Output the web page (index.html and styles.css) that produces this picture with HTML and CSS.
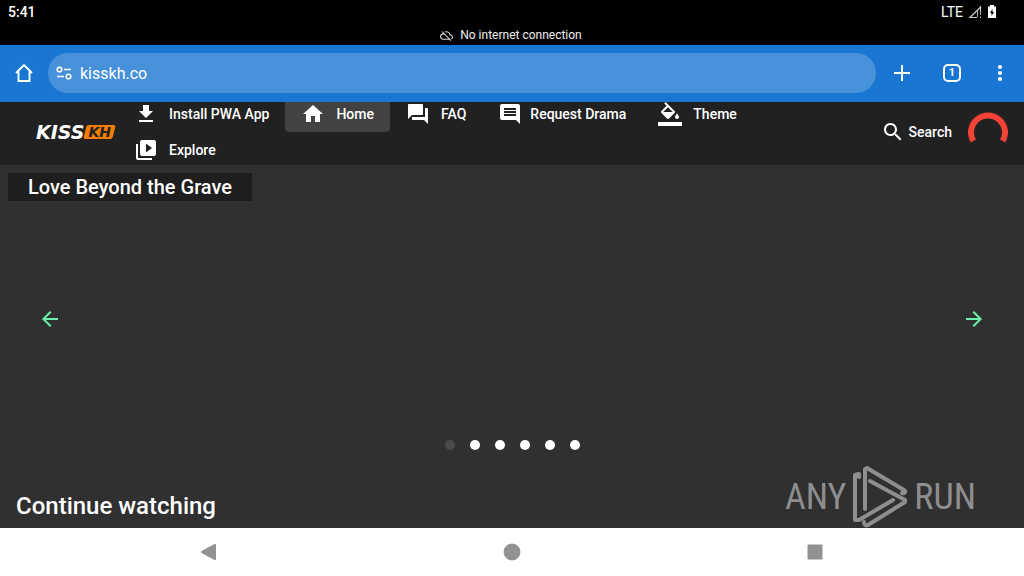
FILE: index.html
```
<!DOCTYPE html>
<html lang="en">
<head>
  <meta charset="UTF-8" />
  <meta name="viewport" content="width=device-width, initial-scale=1.0"/>
  <title>KissKH</title>
  <link rel="stylesheet" href="styles.css">
</head>
<body>

<!-- Android status bar -->
<div class="status-bar">
  <span class="clock">5:41</span>
  <div class="status-icons">
    <span>LTE</span>
    <svg width="14" height="14" viewBox="0 0 14 14"><path d="M9 12.500H2L12.500 2v5" fill="none" stroke="#ccc" stroke-width="1.200"/><path d="M12.500 6v4M12.500 11.500v1.500M9.500 6v6" stroke="#aaa" stroke-width="1"/></svg>
    <svg width="10" height="14" viewBox="0 0 10 14"><path d="M3 0h4v1.500h2V13H1V1.500h2z" fill="#fff"/><path d="M5.500 4L3 8h1.500v3L7 7H5.500z" fill="#000"/></svg>
  </div>
</div>
<div class="offline-bar">
  <svg width="13" height="13" viewBox="0 0 24 24" fill="#ddd"><path d="M19.350 10.040C18.670 6.590 15.640 4 12 4c-1.480 0-2.850.430-4.010 1.170l1.460 1.460C10.210 6.230 11.080 6 12 6c3.040 0 5.500 2.460 5.500 5.500v.500H19c1.660 0 3 1.340 3 3 0 1.130-.640 2.110-1.560 2.620l1.450 1.450C23.160 18.160 24 16.680 24 15c0-2.640-2.050-4.780-4.650-4.960zM3 5.270l2.750 2.740C2.560 8.150 0 10.770 0 14c0 3.310 2.690 6 6 6h11.730l2 2L21 20.730 4.270 4 3 5.270zM7.730 10l8 8H6c-2.210 0-4-1.790-4-4s1.790-4 4-4h1.730z"/></svg>
  <span>No internet connection</span>
</div>

<!-- Browser toolbar -->
<div class="browser-bar">
  <button class="tool" aria-label="Home page">
    <svg width="20" height="20" viewBox="0 0 20 20"><path d="M2 10L10 2l8 8M4.500 8.500V18h11V8.500" fill="none" stroke="#fff" stroke-width="1.900"/></svg>
  </button>
  <div class="address">
    <svg width="16" height="14" viewBox="0 0 16 14" fill="none" stroke="#fff" stroke-width="1.600"><circle cx="3.500" cy="3.500" r="2.300"/><path d="M8 3.500h7M1 10.500h7"/><circle cx="12.500" cy="10.500" r="2.300"/></svg>
    <input type="text" aria-label="Address" value="kisskh.co">
  </div>
  <button class="tool new-tab" aria-label="New tab">
    <svg width="18" height="18" viewBox="0 0 18 18"><path d="M9 1v16M1 9h16" stroke="#fff" stroke-width="2"/></svg>
  </button>
  <button class="tool" aria-label="Tabs"><span class="tab-count">1</span></button>
  <button class="tool" aria-label="Menu">
    <svg width="6" height="18" viewBox="0 0 6 18" fill="#fff"><circle cx="3" cy="3" r="2.100"/><circle cx="3" cy="9" r="2.100"/><circle cx="3" cy="15" r="2.100"/></svg>
  </button>
</div>

<!-- Site header -->
<header class="site-header">
  <a class="logo" href="#"><span>KISS</span><span class="logo-kh">KH</span></a>
  <nav class="menu">
    <a href="#"><svg viewBox="0 0 24 24"><path d="M19 9h-4V3H9v6H5l7 7 7-7zM5 18v2h14v-2H5z"/></svg>Install PWA App</a>
    <a href="#" class="active"><svg viewBox="0 0 24 24"><path d="M10 20v-6h4v6h5v-8h3L12 3 2 12h3v8z"/></svg>Home</a>
    <a href="#"><svg viewBox="0 0 24 24"><path d="M21 6h-2v9H6v2c0 .550.450 1 1 1h11l4 4V7c0-.550-.450-1-1-1zm-4 6V3c0-.550-.450-1-1-1H3c-.550 0-1 .450-1 1v14l4-4h10c.550 0 1-.450 1-1z"/></svg>FAQ</a>
    <a href="#" class="tight"><svg viewBox="0 0 24 24"><path d="M21.990 4c0-1.100-.890-2-1.990-2H4c-1.100 0-2 .900-2 2v12c0 1.100.900 2 2 2h14l4 4-.010-18zM18 14H6v-2h12v2zm0-3H6V9h12v2zm0-3H6V6h12v2z"/></svg>Request Drama</a>
    <a href="#"><svg viewBox="0 0 24 24"><path d="M16.560 8.940L7.620 0 6.210 1.410l2.380 2.380-5.150 5.150c-.590.590-.590 1.540 0 2.120l5.500 5.500c.290.290.680.440 1.060.440s.770-.150 1.060-.440l5.500-5.500c.590-.580.590-1.530 0-2.120zM5.210 10L10 5.210 14.790 10H5.210zM19 11.500s-2 2.170-2 3.500c0 1.100.900 2 2 2s2-.900 2-2c0-1.330-2-3.500-2-3.500zM0 20h24v4H0z"/></svg>Theme</a>
    <a href="#"><svg viewBox="0 0 24 24"><path d="M4 6H2v14c0 1.100.900 2 2 2h14v-2H4V6zm16-4H8c-1.100 0-2 .900-2 2v12c0 1.100.900 2 2 2h12c1.100 0 2-.900 2-2V4c0-1.100-.900-2-2-2zm-8 12.500v-9l6 4.500-6 4.500z"/></svg>Explore</a>
  </nav>
  <button class="search">
    <svg width="24" height="24" viewBox="0 0 24 24"><path d="M15.500 14h-.790l-.280-.270C15.410 12.590 16 11.110 16 9.500 16 5.910 13.090 3 9.500 3S3 5.910 3 9.500 5.910 16 9.500 16c1.610 0 3.090-.590 4.230-1.570l.270.280v.790l5 4.990L20.490 19l-4.990-5zm-6 0C7.010 14 5 11.990 5 9.500S7.010 5 9.500 5 14 7.010 14 9.500 11.990 14 9.500 14z"/></svg>
    Search
  </button>
  <svg class="spinner" width="40" height="40" viewBox="0 0 40 40"><path d="M5.300 29A17 17 0 1 1 34.700 29" fill="none" stroke="#f44336" stroke-width="6"/></svg>
</header>

<main class="content">
  <section class="carousel">
    <h2 class="slide-title">Love Beyond the Grave</h2>
    <div class="arrows">
      <button aria-label="Previous"><svg width="24" height="24" viewBox="0 0 24 24"><path d="M20 11H7.830l5.590-5.590L12 4l-8 8 8 8 1.410-1.410L7.830 13H20v-2z"/></svg></button>
      <button aria-label="Next"><svg width="24" height="24" viewBox="0 0 24 24"><path d="M12 4l-1.410 1.410L16.170 11H4v2h12.170l-5.580 5.590L12 20l8-8z"/></svg></button>
    </div>
    <div class="dots">
      <button class="current" aria-label="Slide 1"></button>
      <button aria-label="Slide 2"></button>
      <button aria-label="Slide 3"></button>
      <button aria-label="Slide 4"></button>
      <button aria-label="Slide 5"></button>
      <button aria-label="Slide 6"></button>
    </div>
  </section>
  <h1>Continue watching</h1>

  <div class="watermark">
    <span>ANY</span>
    <svg width="56" height="62" viewBox="0 0 56 62" fill="none" stroke="#8e8e8e" stroke-width="4" stroke-linejoin="round" stroke-linecap="round">
      <path d="M7 11V8L3 9v45h4l34-20"/>
      <path d="M13 43V3l2-1 37 22c2 1 1 4-2 3"/>
      <path d="M18 15l35 19v2L16 59c-2 1-4 0-4-3"/>
    </svg>
    <span>RUN</span>
  </div>
</main>

<!-- Android navigation -->
<div class="system-nav">
  <button aria-label="Back"><svg width="24" height="24" viewBox="0 0 24 24"><path d="M18 5v14L5 12z" stroke-width="2"/></svg></button>
  <button aria-label="Home"><svg width="24" height="24" viewBox="0 0 24 24"><circle cx="12" cy="12" r="8"/></svg></button>
  <button aria-label="Recents"><svg width="24" height="24" viewBox="0 0 24 24"><rect x="5" y="5" width="14" height="14"/></svg></button>
</div>

</body>
</html>
```
FILE: styles.css
```
* { margin: 0; padding: 0; box-sizing: border-box; }

body {
  min-height: 100vh;
  display: flex;
  flex-direction: column;
  background: #303030;
  color: #fff;
  font-family: Roboto, "Liberation Sans", sans-serif;
  font-size: 14px;
}

button {
  background: none;
  border: none;
  color: inherit;
  font: inherit;
  cursor: pointer;
}

a {
  color: inherit;
  text-decoration: none;
}

svg { display: block; flex-shrink: 0; }

.status-bar {
  display: flex;
  justify-content: space-between;
  align-items: center;
  height: 25px;
  padding: 0 27px 2px 8px;
  background: #000;
}

.clock { font-weight: 500; }

.status-icons {
  display: flex;
  align-items: center;
  gap: 5px;
}

.offline-bar {
  display: flex;
  justify-content: center;
  align-items: center;
  gap: 7px;
  height: 20px;
  padding-right: 2px;
  background: #000;
  color: #eee;
  font-size: 12px;
}

.browser-bar {
  display: flex;
  align-items: center;
  height: 57px;
  padding-bottom: 1px;
  background: #1976d2;
}

.tool {
  display: flex;
  justify-content: center;
  align-items: center;
  width: 48px;
  height: 48px;
}

.new-tab { width: 52px; }

.address {
  flex: 1;
  display: flex;
  align-items: center;
  gap: 8px;
  height: 40px;
  padding: 0 8px;
  border-radius: 20px;
  background: #4791db;
}

.address input {
  flex: 1;
  border: none;
  outline: none;
  background: none;
  color: #fff;
  font: inherit;
  font-size: 16px;
}

.tab-count {
  width: 18px;
  height: 18px;
  border: 2px solid #fff;
  border-radius: 5px;
  font-size: 11px;
  font-weight: 700;
  line-height: 14px;
}

.site-header {
  display: flex;
  align-items: center;
  height: 63px;
  padding: 0 16px 3px 36px;
  overflow: hidden;
  background: #212121;
  font-weight: 500;
}

.logo {
  display: flex;
  align-items: center;
  width: 82px;
  font-family: "DejaVu Sans", sans-serif;
  font-size: 19px;
  font-style: italic;
  font-weight: 700;
  line-height: 14px;
}

.logo-kh {
  position: relative;
  z-index: 0;
  padding: 0 4px;
  color: #212121;
  font-size: 14px;
}

.logo-kh::before {
  content: "";
  position: absolute;
  inset: 0 1px;
  z-index: -1;
  border-radius: 2px;
  background: #f57c00;
  transform: skewX(-14deg);
}

.menu {
  flex: 1;
  display: flex;
  flex-wrap: wrap;
  margin-right: 24px;
}

.menu a {
  display: flex;
  align-items: center;
  gap: 11px;
  height: 36px;
  padding: 0 16px;
  border-radius: 4px;
}

.menu svg {
  width: 24px;
  height: 24px;
  fill: #fff;
}

.menu .active { background: #424242; }
.menu .tight { gap: 8px; }

.search {
  display: flex;
  align-items: center;
  gap: 4px;
  padding: 0 16px 0 12px;
  fill: #fff;
}

.content {
  flex: 1;
  position: relative;
}

.carousel {
  display: grid;
  grid-template-rows: 28px 1fr 28px;
  height: 292px;
  margin: 8px;
}

.slide-title {
  justify-self: start;
  padding: 0 20px;
  background: #1e1e1e;
  font-size: 20px;
  font-weight: 500;
  line-height: 28px;
}

.arrows {
  display: flex;
  justify-content: space-between;
  align-items: center;
  padding: 0 30px;
  fill: #69f0ae;
}

.dots {
  display: flex;
  justify-content: center;
  gap: 15px;
  padding-top: 3px;
}

.dots button {
  width: 10px;
  height: 10px;
  border-radius: 50%;
  background: #fff;
}

.dots .current { background: #4a4a4a; }

h1 {
  padding: 17px 16px 6px;
  font-size: 24px;
  font-weight: 500;
  line-height: 32px;
}

.watermark {
  position: absolute;
  right: 48px;
  bottom: 0;
  display: flex;
  align-items: center;
  gap: 6px;
  color: #8e8e8e;
  font-size: 36px;
  font-weight: 400;
  font-family: "Liberation Sans Narrow", "Roboto Condensed", Roboto, sans-serif;
  pointer-events: none;
}

.system-nav {
  display: flex;
  justify-content: space-around;
  align-items: center;
  height: 48px;
  padding: 0 57px;
  background: #fff;
  fill: #929292;
  stroke: #929292;
  stroke-linejoin: round;
}
```
